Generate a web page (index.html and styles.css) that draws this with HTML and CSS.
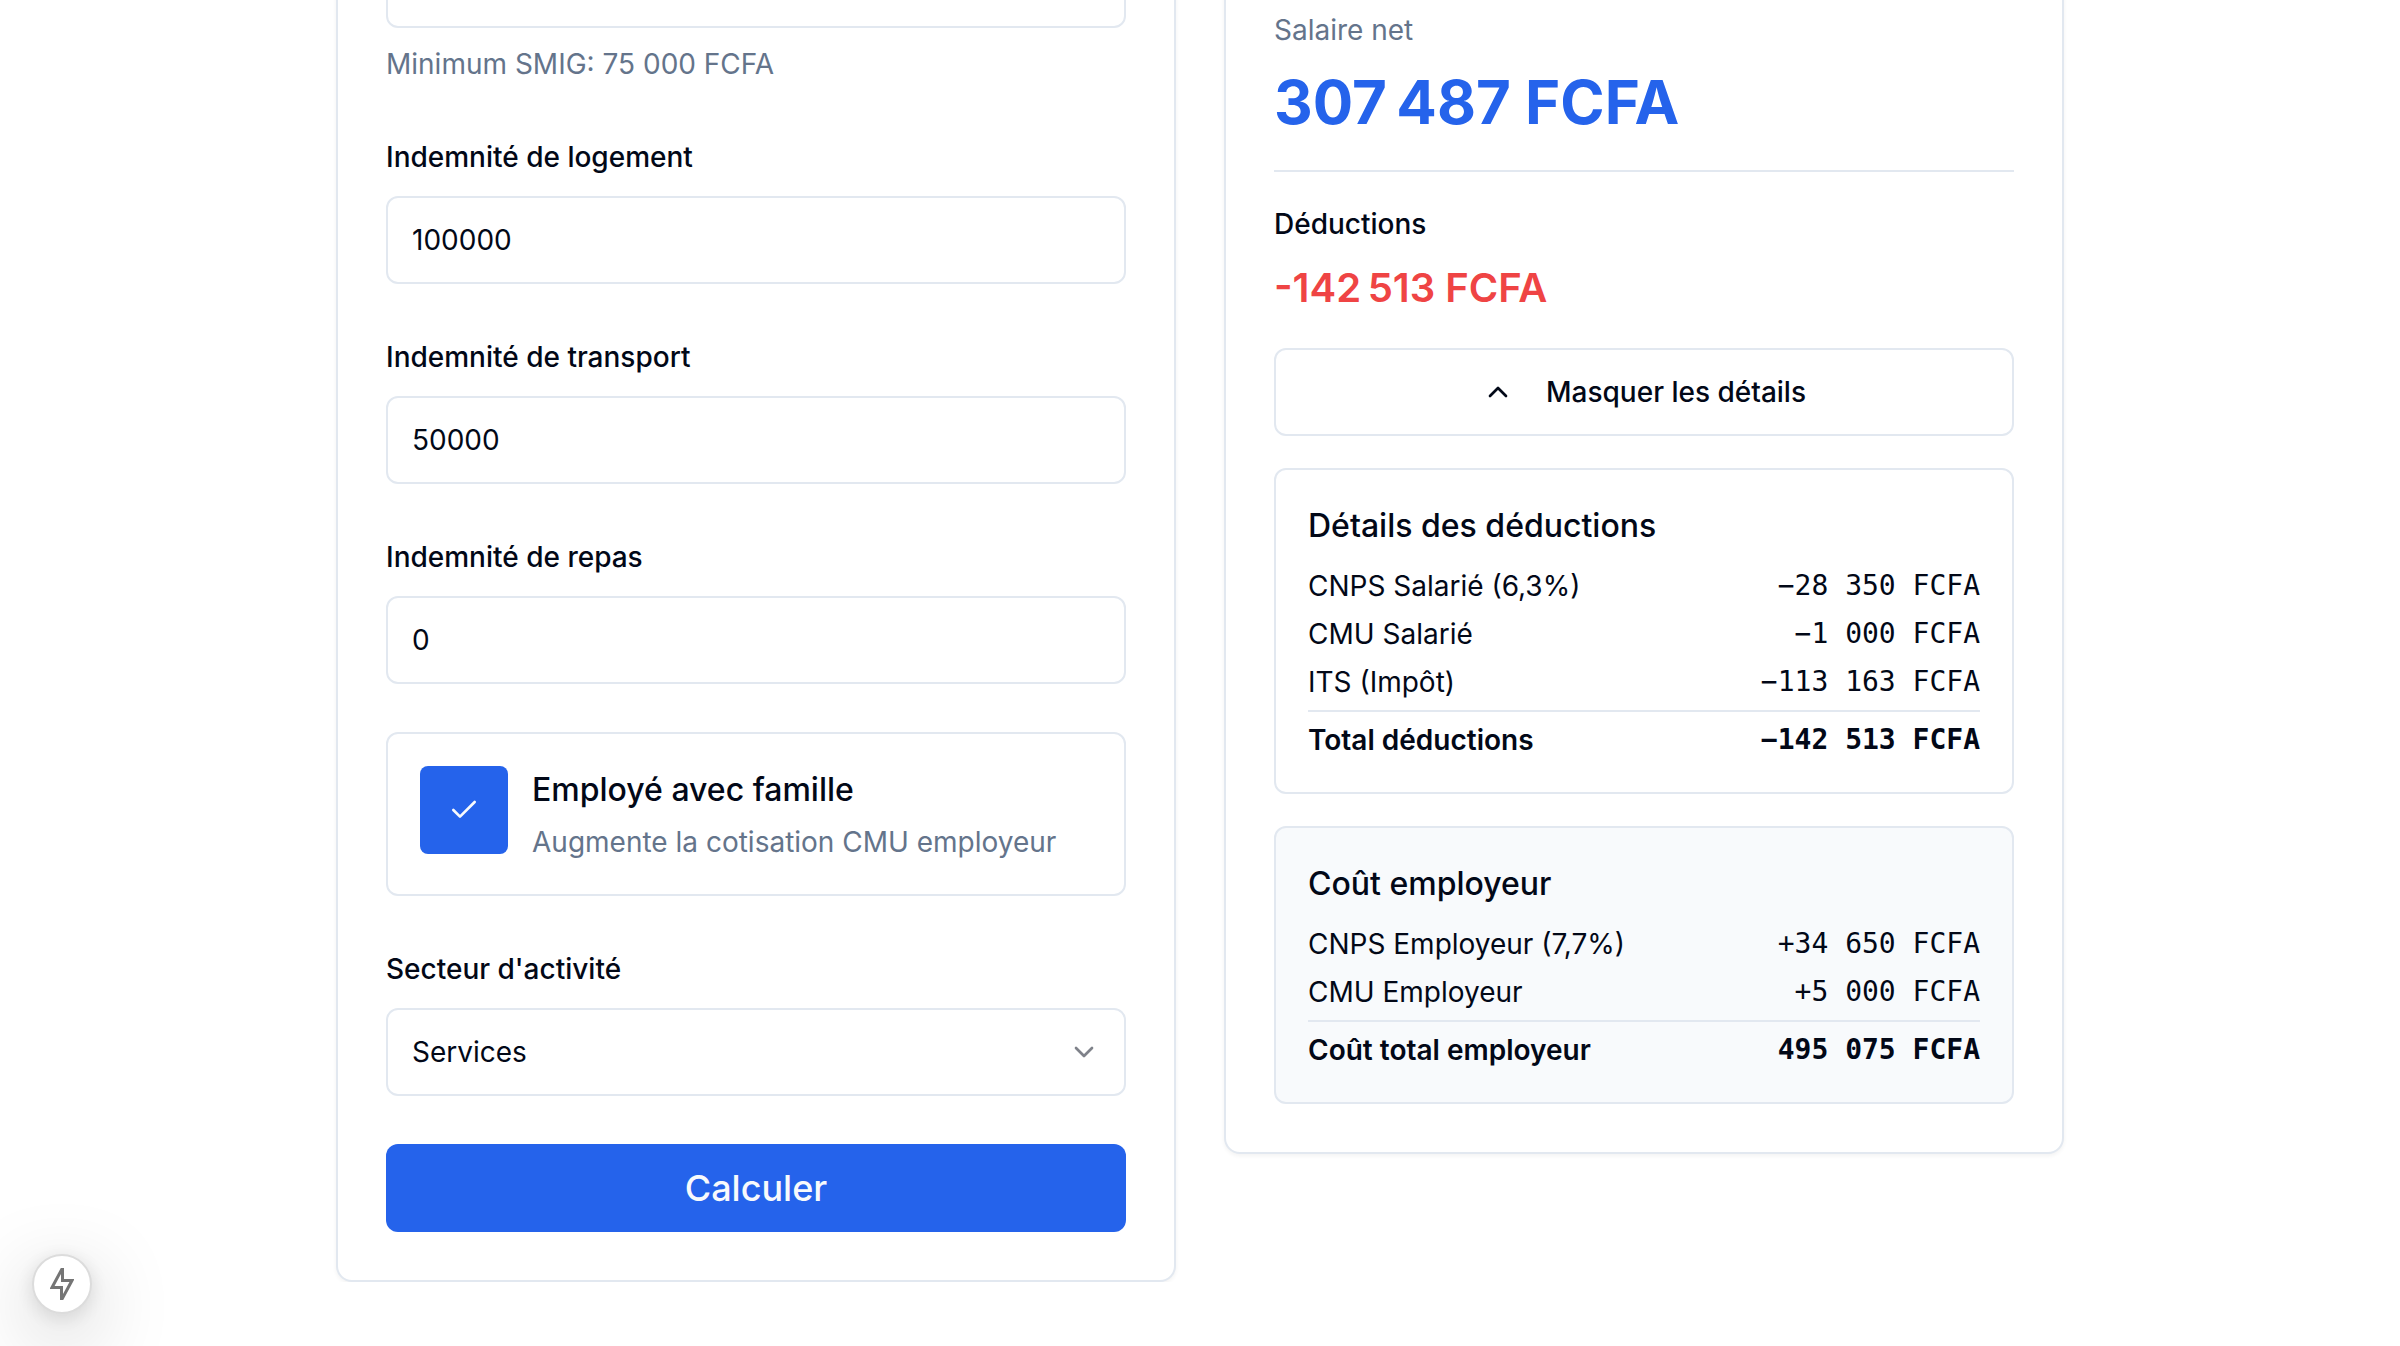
FILE: index.html
```html
<!DOCTYPE html>
<html lang="fr">
<head>
<meta charset="utf-8">
<meta name="viewport" content="width=device-width, initial-scale=1">
<title>Calculateur de salaire</title>
<link rel="stylesheet" href="styles.css">
</head>
<body>
<main class="page">
  <form class="card form">
    <div class="field">
      <input class="control" type="text" id="base" aria-label="Salaire de base">
      <p class="hint">Minimum SMIG: 75 000 FCFA</p>
    </div>
    <div class="field">
      <label class="label" for="housing">Indemnité de logement</label>
      <input class="control" type="text" inputmode="numeric" id="housing" value="100000">
    </div>
    <div class="field">
      <label class="label" for="transport">Indemnité de transport</label>
      <input class="control" type="text" inputmode="numeric" id="transport" value="50000">
    </div>
    <div class="field">
      <label class="label" for="meal">Indemnité de repas</label>
      <input class="control" type="text" inputmode="numeric" id="meal" value="0">
    </div>
    <div class="option">
      <span class="check">
        <input class="check-input" type="checkbox" id="family" checked>
        <svg class="icon check-icon" viewBox="0 0 24 24" aria-hidden="true"><path d="M20 6 9 17l-5-5"/></svg>
      </span>
      <div class="option-text">
        <label class="option-title" for="family">Employé avec famille</label>
        <p class="option-note">Augmente la cotisation CMU employeur</p>
      </div>
    </div>
    <div class="field">
      <label class="label" for="sector">Secteur d'activité</label>
      <div class="select">
        <select class="control" id="sector"><option>Services</option></select>
        <svg class="icon select-icon" viewBox="0 0 24 24" aria-hidden="true"><path d="m6 9 6 6 6-6"/></svg>
      </div>
    </div>
    <button class="submit" type="button">Calculer</button>
  </form>

  <section class="card results">
    <div class="net">
      <p class="net-label">Salaire net</p>
      <p class="net-amount">307&#8201;487 FCFA</p>
    </div>
    <div class="deductions">
      <p class="deductions-label">Déductions</p>
      <p class="deductions-amount">-142&#8201;513 FCFA</p>
    </div>
    <button class="toggle" type="button">
      <svg class="icon" viewBox="0 0 24 24" aria-hidden="true"><path d="m18 15-6-6-6 6"/></svg>
      Masquer les détails
    </button>
    <section class="panel">
      <h2 class="panel-title">Détails des déductions</h2>
      <dl class="rows">
        <div class="row"><dt>CNPS Salarié (6,3%)</dt><dd class="amount">−28 350 FCFA</dd></div>
        <div class="row"><dt>CMU Salarié</dt><dd class="amount">−1 000 FCFA</dd></div>
        <div class="row"><dt>ITS (Impôt)</dt><dd class="amount">−113 163 FCFA</dd></div>
        <div class="row total"><dt>Total déductions</dt><dd class="amount">−142 513 FCFA</dd></div>
      </dl>
    </section>
    <section class="panel muted">
      <h2 class="panel-title">Coût employeur</h2>
      <dl class="rows">
        <div class="row"><dt>CNPS Employeur (7,7%)</dt><dd class="amount">+34 650 FCFA</dd></div>
        <div class="row"><dt>CMU Employeur</dt><dd class="amount">+5 000 FCFA</dd></div>
        <div class="row total"><dt>Coût total employeur</dt><dd class="amount">495 075 FCFA</dd></div>
      </dl>
    </section>
  </section>
</main>

<button class="badge" type="button" aria-label="Route statique">
  <svg class="bolt" viewBox="0 0 24 32" aria-hidden="true"><path d="M12.500 0V12.500H22L11.500 32V19.500H2Z"/></svg>
</button>
</body>
</html>
```
FILE: styles.css
```css
:root {
  --ink: #020817;
  --muted: #64748b;
  --line: #e2e8f0;
  --blue: #2563eb;
  --red: #ef4444;
}

* { box-sizing: border-box; margin: 0; }

body {
  overflow: hidden;
  background: #fff;
  color: var(--ink);
  font-family: Inter, "Liberation Sans", sans-serif;
  font-size: 32px;
  line-height: 48px;
}

button, input, select { font: inherit; color: inherit; }

/* The view starts part-way down the form */
.page {
  display: grid;
  grid-template-columns: 1fr 1fr;
  align-items: start;
  gap: 48px;
  max-width: 1792px;
  margin: -110px auto 0;
  padding: 0 32px;
}

.card {
  display: flex;
  flex-direction: column;
  padding: 48px;
  border: 2px solid var(--line);
  border-radius: 16px;
  background: #fff;
  box-shadow: 0 2px 4px rgba(0, 0, 0, 0.05);
}

.form { gap: 48px; }
.results { gap: 32px; padding-top: 118px; }

.label { font-size: 28px; line-height: 28px; font-weight: 500; }

.control {
  display: block;
  width: 100%;
  height: 88px;
  padding: 0 24px;
  border: 2px solid var(--line);
  border-radius: 12px;
  background: #fff;
  font-size: 28px;
  appearance: none;
}

.label + .control, .label + .select, .hint { margin-top: 16px; }

.hint, .net-label, .option-note {
  color: var(--muted);
  font-size: 28px;
  line-height: 40px;
}

.icon {
  width: 32px;
  height: 32px;
  fill: none;
  stroke: currentColor;
  stroke-width: 2;
  stroke-linecap: round;
  stroke-linejoin: round;
}

.option {
  display: flex;
  gap: 24px;
  padding: 32px;
  border: 2px solid var(--line);
  border-radius: 12px;
}

.check { display: grid; place-items: center; width: 88px; height: 88px; }
.check-input {
  grid-area: 1 / 1;
  width: 100%;
  height: 100%;
  margin: 0;
  border-radius: 8px;
  background: var(--blue);
  appearance: none;
}
.check-icon { grid-area: 1 / 1; color: #f8fafc; pointer-events: none; }

.option-text { display: flex; flex-direction: column; gap: 8px; }
.option-title { font-weight: 500; }

.select { display: grid; align-items: center; }
.select > * { grid-area: 1 / 1; }
.select-icon { justify-self: end; margin-right: 26px; opacity: 0.5; pointer-events: none; }

.submit {
  height: 88px;
  border: 0;
  border-radius: 12px;
  background: var(--blue);
  color: #f8fafc;
  font-size: 36px;
  font-weight: 500;
}

.net {
  display: flex;
  flex-direction: column;
  gap: 16px;
  padding-bottom: 32px;
  border-bottom: 2px solid var(--line);
}
.net-amount { color: var(--blue); font-size: 60px; line-height: 72px; font-weight: 700; }

.deductions { display: flex; flex-direction: column; gap: 16px; }
.deductions-label { font-size: 28px; line-height: 40px; font-weight: 500; }
.deductions-amount { color: var(--red); font-size: 40px; line-height: 56px; font-weight: 600; }

.toggle {
  display: flex;
  align-items: center;
  justify-content: center;
  gap: 32px;
  height: 88px;
  border: 2px solid var(--line);
  border-radius: 12px;
  background: #fff;
  font-size: 28px;
  font-weight: 500;
}

.panel {
  display: flex;
  flex-direction: column;
  gap: 16px;
  padding: 32px;
  border: 2px solid var(--line);
  border-radius: 12px;
}
.panel.muted { background: #f8fafc; }
.panel-title { font-size: 32px; font-weight: 500; }

.rows { display: flex; flex-direction: column; gap: 8px; font-size: 28px; line-height: 40px; }
.row { display: flex; justify-content: space-between; }
.amount { font-family: "DejaVu Sans Mono", "Liberation Mono", monospace; }
.total { padding-top: 8px; border-top: 2px solid var(--line); font-weight: 600; }

.badge {
  position: fixed;
  left: 32px;
  bottom: 32px;
  display: grid;
  place-items: center;
  width: 60px;
  height: 60px;
  padding: 0;
  border: 2px solid #dcdcdc;
  border-radius: 50%;
  background: #fff;
  color: #757575;
  box-shadow: 0 22px 80px rgba(0, 0, 0, 0.25), 0 4px 20px rgba(0, 0, 0, 0.12);
}
.bolt { width: 24px; height: 32px; fill: none; stroke: currentColor; stroke-width: 3; }
```
